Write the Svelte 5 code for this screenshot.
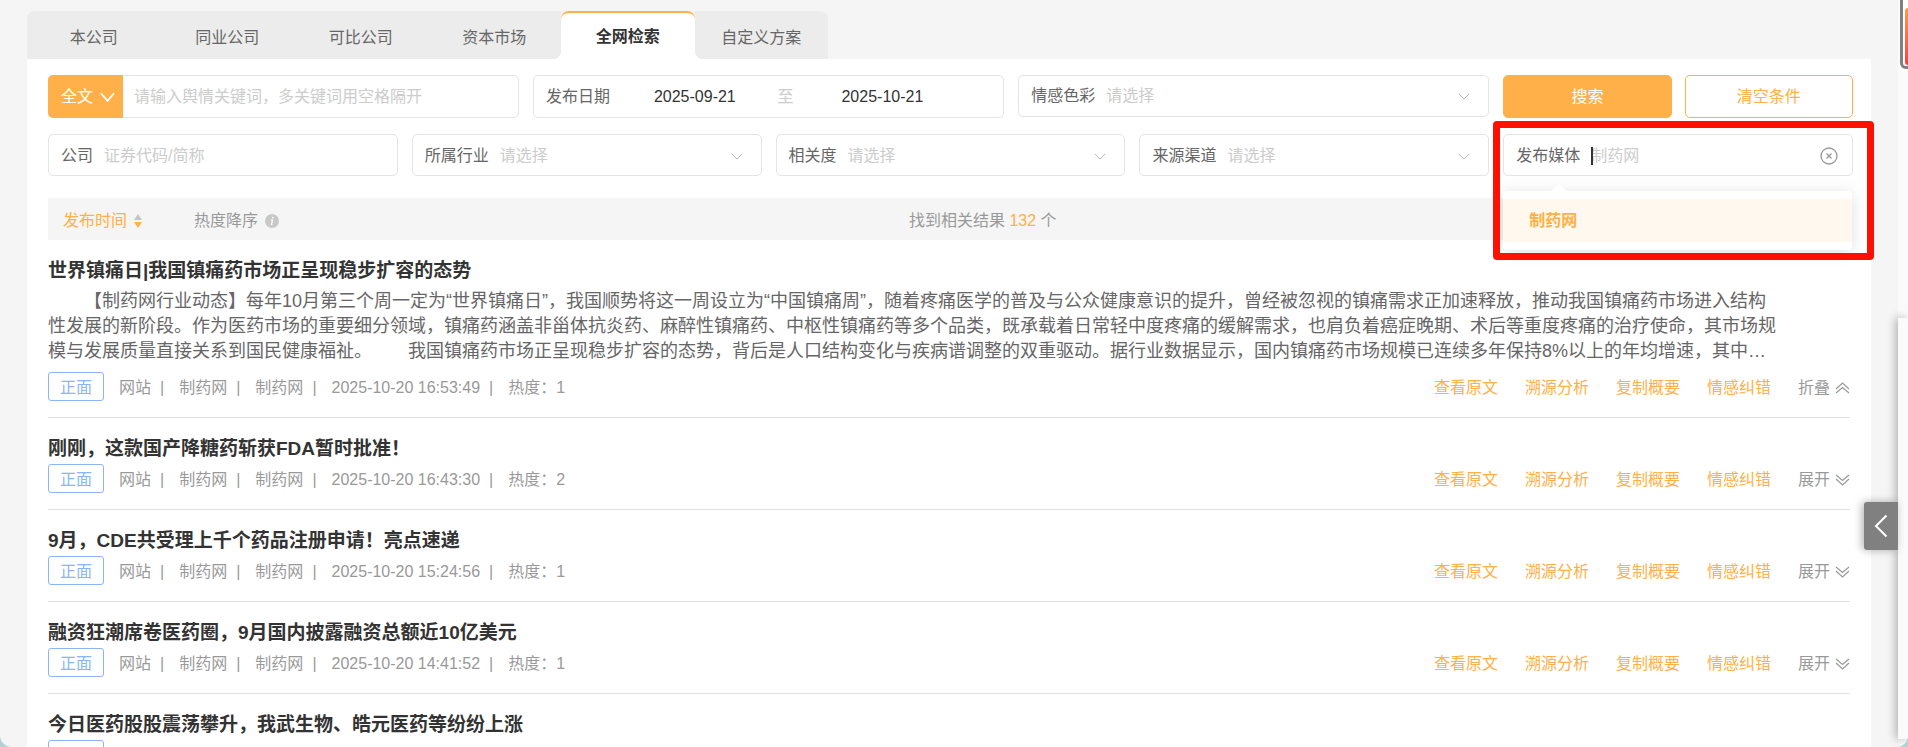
<script>
  const tabs = ['本公司', '同业公司', '可比公司', '资本市场', '全网检索', '自定义方案'];
  const actions = ['查看原文', '溯源分析', '复制概要', '情感纠错'];

  let activeTab = $state('全网检索');
  let keyword = $state('');
  let company = $state('');
  let media = $state('');
  let startDate = $state('2025-09-21');
  let endDate = $state('2025-10-21');
  let suggestOpen = $state(true);

  let articles = $state([
    {
      title: '世界镇痛日|我国镇痛药市场正呈现稳步扩容的态势',
      summary:
        '　　【制药网行业动态】每年10月第三个周一定为“世界镇痛日”，我国顺势将这一周设立为“中国镇痛周”，随着疼痛医学的普及与公众健康意识的提升，曾经被忽视的镇痛需求正加速释放，推动我国镇痛药市场进入结构性发展的新阶段。作为医药市场的重要细分领域，镇痛药涵盖非甾体抗炎药、麻醉性镇痛药、中枢性镇痛药等多个品类，既承载着日常轻中度疼痛的缓解需求，也肩负着癌症晚期、术后等重度疼痛的治疗使命，其市场规模与发展质量直接关系到国民健康福祉。　　我国镇痛药市场正呈现稳步扩容的态势，背后是人口结构变化与疾病谱调整的双重驱动。据行业数据显示，国内镇痛药市场规模已连续多年保持8%以上的年均增速，其中…',
      time: '2025-10-20 16:53:49',
      heat: 1,
      open: true,
    },
    { title: '刚刚，这款国产降糖药斩获FDA暂时批准！', time: '2025-10-20 16:43:30', heat: 2, open: false },
    { title: '9月，CDE共受理上千个药品注册申请！亮点速递', time: '2025-10-20 15:24:56', heat: 1, open: false },
    { title: '融资狂潮席卷医药圈，9月国内披露融资总额近10亿美元', time: '2025-10-20 14:41:52', heat: 1, open: false },
    { title: '今日医药股股震荡攀升，我武生物、皓元医药等纷纷上涨', time: '2025-10-20 14:20:16', heat: 1, open: false },
  ]);

  function pickMedia(name) {
    media = name;
    suggestOpen = false;
  }
</script>

{#snippet selectField(label, id)}
  <div class="field">
    <label for={id}>{label}</label>
    <select {id}>
      <option>请选择</option>
    </select>
    <svg class="arrow" viewBox="0 0 14 8" aria-hidden="true"><path d="M1 1l6 6 6-6" /></svg>
  </div>
{/snippet}

<div class="page">
  <div class="tabs" role="tablist">
    {#each tabs as tab}
      <button
        class="tab"
        class:active={tab === activeTab}
        role="tab"
        aria-selected={tab === activeTab}
        onclick={() => (activeTab = tab)}>{tab}</button
      >
    {/each}
  </div>

  <main class="panel">
    <form class="filters" onsubmit={(e) => e.preventDefault()}>
      <div class="wide">
        <div class="field keyword">
          <button type="button" class="scope">
            全文
            <svg viewBox="0 0 16 10" aria-hidden="true"><path d="M1 1l7 8 7-8" /></svg>
          </button>
          <input
            type="text"
            aria-label="关键词"
            placeholder="请输入舆情关键词，多关键词用空格隔开"
            bind:value={keyword}
          />
        </div>
        <div class="field dates">
          <label for="start">发布日期</label>
          <input id="start" type="text" bind:value={startDate} />
          <span class="to">至</span>
          <input type="text" aria-label="结束日期" bind:value={endDate} />
        </div>
        {@render selectField('情感色彩', 'emotion')}
      </div>
      <div class="buttons">
        <button type="submit" class="btn primary">搜索</button>
        <button type="reset" class="btn">清空条件</button>
      </div>

      <div class="field">
        <label for="company">公司</label>
        <input id="company" type="text" placeholder="证券代码/简称" bind:value={company} />
      </div>
      {@render selectField('所属行业', 'industry')}
      {@render selectField('相关度', 'relevance')}
      {@render selectField('来源渠道', 'channel')}
      <div class="field">
        <label for="media">发布媒体</label>
        <span class="caret"></span>
        <input id="media" type="text" placeholder="制药网" bind:value={media} />
        <button type="button" class="clear" aria-label="清除" onclick={() => (media = '')}>
          <svg viewBox="0 0 18 18" aria-hidden="true">
            <circle cx="9" cy="9" r="8" />
            <path d="M6.5 6.5l5 5M11.5 6.5l-5 5" />
          </svg>
        </button>
        {#if suggestOpen}
          <div class="suggest">
            <button type="button" onclick={() => pickMedia('制药网')}>制药网</button>
          </div>
        {/if}
        <div class="highlight"></div>
      </div>
    </form>

    <div class="results">
      <div class="bar">
        <div class="sorts">
          <button class="sort on">
            发布时间
            <svg class="updown" viewBox="0 0 8 14" aria-hidden="true">
              <path class="up" d="M4 0l4 6H0z" />
              <path class="down" d="M4 14l4-6H0z" />
            </svg>
          </button>
          <button class="sort">
            热度降序
            <svg class="info" viewBox="0 0 14 14" aria-hidden="true">
              <circle cx="7" cy="7" r="7" />
              <path d="M6 6h1.5l-1 4.5h1" />
              <circle class="dot" cx="7.8" cy="3.6" r="0.9" />
            </svg>
          </button>
        </div>
        <p class="count">找到相关结果 <b>132</b> 个</p>
      </div>

      {#each articles as article}
        <article>
          <h2>{article.title}</h2>
          {#if article.open && article.summary}
            <p class="summary">{article.summary}</p>
          {/if}
          <div class="row">
            <span class="tag">正面</span>
            <div class="meta">
              <span>网站</span>
              <span>制药网</span>
              <span>制药网</span>
              <span>{article.time}</span>
              <span>热度：{article.heat}</span>
            </div>
            <div class="actions">
              {#each actions as action}
                <a href="#top">{action}</a>
              {/each}
              <button class="fold" class:open={article.open} onclick={() => (article.open = !article.open)}>
                {article.open ? '折叠' : '展开'}
                <svg viewBox="0 0 15 12" aria-hidden="true">
                  <path d="M1 1l6.5 5.5L14 1M1 5l6.5 6L14 5" />
                </svg>
              </button>
            </div>
          </div>
        </article>
      {/each}
    </div>
  </main>

  <aside class="drawer"></aside>
  <button class="handle" aria-label="展开侧栏">
    <svg viewBox="0 0 14 24" aria-hidden="true"><path d="M12.5 1.5L2 12l10.5 10.5" /></svg>
  </button>
  <div class="float"><div class="float-inner"></div></div>
</div>

<style>
  :global(body) { background: #b4d2d5; }
  .page {
    position: relative;
    box-sizing: border-box;
    height: 100vh;
    padding: 11px 37px 0 27px;
    overflow: hidden;
    background: #f5f5f5;
    border-radius: 0 0 12px 12px;
    font-family: "Liberation Sans", "Noto Sans CJK SC", sans-serif;
    font-size: 16px;
    line-height: 24px;
    color: #666;
  }
  button, input, select { font: inherit; color: inherit; }
  button { margin: 0; padding: 0; border: none; background: none; cursor: pointer; }
  svg { fill: none; stroke: currentColor; flex: none; }

  .tabs { display: grid; grid-template-columns: repeat(6, 1fr); width: 801px; }
  .tab { position: relative; height: 48px; padding-top: 6px; background: #ececec; }
  .tab:first-child { border-top-left-radius: 8px; }
  .tab:last-child { border-top-right-radius: 8px; }
  .tab.active {
    z-index: 1; padding-top: 2px;
    background: #fff;
    border-top: 2px solid #ffb048; border-radius: 8px 8px 0 0;
    font-weight: bold; color: #333;
  }
  .tab.active::before, .tab.active::after {
    content: ''; position: absolute; bottom: 0;
    width: 8px; height: 8px;
  }
  .tab.active::before { left: -8px; background: radial-gradient(circle at 0 0, transparent 8px, #fff 8px); }
  .tab.active::after { right: -8px; background: radial-gradient(circle at 100% 0, transparent 8px, #fff 8px); }

  .panel { min-height: 100vh; padding: 16px 18px 0 21px; background: #fff; }
  .filters {
    display: grid; grid-template-columns: repeat(5, minmax(0, 1fr));
    gap: 16px 14px;
  }
  .wide { grid-column: span 4; display: grid; grid-template-columns: repeat(3, minmax(0, 1fr)); gap: 14px; }
  .buttons { display: grid; grid-template-columns: 1fr 1fr; gap: 13px; }
  .field {
    position: relative; box-sizing: border-box;
    display: flex; align-items: center; gap: 11px;
    height: 42px; padding-left: 12px;
    border: 1px solid #e4e4e4; border-radius: 5px;
  }
  .filters > .field { padding-top: 2px; }
  .wide .keyword, .wide .dates { height: 43px; }
  .field label { flex: none; }
  .field input, .field select {
    flex: 1; min-width: 0; height: 24px; padding: 0;
    border: none; outline: none; background: none;
  }
  .field select { appearance: none; color: #ccc; }
  .field input::placeholder { color: #ccc; opacity: 1; }
  .arrow { position: absolute; right: 18px; width: 12px; height: 7px; color: #aaa; pointer-events: none; }
  .field.keyword { padding-left: 0; }
  .scope {
    display: flex; align-items: center; gap: 7px;
    height: 43px; margin: -1px 0 -1px -1px; padding: 0 8px 0 13px;
    border-radius: 5px 0 0 5px;
    background: #ffb048; color: #fff;
  }
  .scope svg { width: 15px; height: 10px; stroke-width: 2; }
  .field.dates { gap: 0; padding-right: 38px; }
  .dates label { margin-right: 2px; }
  .field.dates input { text-align: center; color: #333; }
  .to { width: 16px; margin-right: 6px; color: #ccc; }
  .btn {
    height: 43px; box-sizing: border-box;
    border: 1px solid #ffb048; border-radius: 5px;
    color: #ffb048;
  }
  .btn.primary { background: #ffb048; color: #fff; }

  .caret { position: absolute; left: 87px; width: 2px; height: 18px; background: #333; }
  .clear { display: flex; margin-right: 14px; color: #999; }
  .clear svg { width: 18px; height: 18px; stroke-width: 1.3; }
  .suggest {
    position: absolute; z-index: 2; top: 56px; left: -1px; right: 0;
    padding: 8px 0;
    border-radius: 4px; background: #fff;
    box-shadow: 0 2px 16px rgba(0, 0, 0, 0.13);
  }
  .suggest::before {
    content: ''; position: absolute; top: -7px; left: 48px;
    border: solid transparent; border-width: 0 8px 7px; border-bottom-color: #fff;
  }
  .suggest button {
    width: 100%; height: 43px; padding-left: 26px;
    background: #fff8ee; color: #ffb048;
    font-weight: bold; text-align: left;
  }
  .highlight {
    position: absolute; z-index: 3; top: -14px; left: -11px; right: -22px;
    box-sizing: border-box; height: 139px;
    border: 7px solid #ff1000; border-radius: 4px;
    pointer-events: none;
  }

  .results { margin: 22px 3px 0 0; }
  .bar {
    display: flex; align-items: center;
    box-sizing: border-box; height: 42px; padding: 3px 15px 0;
    background: #f5f5f5; color: #999;
  }
  .sorts { display: flex; gap: 52px; width: 846px; }
  .sort { display: flex; align-items: center; gap: 7px; }
  .sort.on { color: #ffb048; }
  .updown { width: 8px; height: 14px; stroke: none; }
  .updown .up { fill: #c4c4c4; }
  .updown .down { fill: #ffb048; }
  .info { width: 14px; height: 14px; fill: #c8c8c8; stroke: none; }
  .info path { fill: none; stroke: #fff; stroke-width: 1.2; }
  .info .dot { fill: #fff; }
  .count { margin: 0; }
  .count b { font-weight: normal; color: #ffb048; }

  article { padding: 16px 0; border-bottom: 1px solid #e2e2e2; }
  h2 { margin: 0; padding: 2px 0; font-size: 19px; line-height: 26px; color: #333; }
  .summary {
    margin: 3px 0 8px; padding-right: 70px;
    font-size: 18px; line-height: 25px;
    text-spacing-trim: space-all;
  }
  .row { display: flex; align-items: center; color: #999; }
  .tag {
    box-sizing: border-box; height: 29px; padding: 0 11px;
    border: 1px solid #8cb4f8; border-radius: 3px;
    line-height: 29px; color: #8cb4f8;
  }
  .meta { display: flex; margin-left: 15px; padding-top: 2px; }
  .meta span:not(:last-child)::after { content: '|'; margin: 0 15px 0 9px; }
  .actions { display: flex; gap: 27px; margin-left: auto; padding-top: 2px; }
  .actions a { color: #ffb048; text-decoration: none; }
  .fold { display: flex; align-items: center; gap: 5px; }
  .fold svg { width: 15px; height: 12px; stroke-width: 1.2; }
  .fold.open svg { transform: scaleY(-1); }

  .drawer {
    position: absolute; top: 0; right: 0; bottom: 0;
    width: 10px;
    background: #fafafa;
    border-bottom-right-radius: 12px;
  }
  .drawer::before {
    content: ''; position: absolute; inset: 318px 0 8px 0;
    box-shadow: -2px 0 10px rgba(0, 0, 0, 0.3);
    clip-path: inset(-12px 0 -12px -16px);
  }
  .handle {
    position: absolute; top: 502px; right: 10px;
    display: flex; align-items: center; justify-content: center;
    width: 34px; height: 48px;
    border-radius: 3px 0 0 3px;
    background: #808080; color: #fff;
    box-shadow: -2px 0 8px rgba(0, 0, 0, 0.3);
  }
  .handle svg { width: 14px; height: 24px; stroke-width: 2; }
  .float {
    position: absolute; top: -8px; right: -8px;
    box-sizing: border-box; width: 16px; height: 77px; padding: 13px 0 1px 2px;
    border: 3px solid #808080; border-radius: 6px;
    background: #fff;
  }
  .float-inner { height: 100%; border-radius: 3px; background: linear-gradient(#ff9a4d, #ff3d3d); }
</style>
